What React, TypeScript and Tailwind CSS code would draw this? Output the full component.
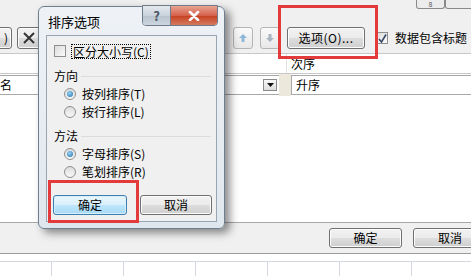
import React from "react";

const font = { fontFamily: '"Noto Sans CJK SC", "Noto Sans", sans-serif' };

function WinButton({
  label,
  className = "",
  focused = false,
}: {
  label: React.ReactNode;
  className?: string;
  focused?: boolean;
}) {
  return (
    <div
      className={`flex shrink-0 items-center justify-center rounded-[3px] border text-[12px] leading-none text-black ${
        focused
          ? "border-[#3c7fb1] bg-[linear-gradient(#eaf6fd_0%,#d9f0fc_50%,#bee6fd_51%,#a7d9f5_100%)] shadow-[inset_0_0_0_1px_#d8eefb]"
          : "border-[#707070] bg-[linear-gradient(#f2f2f2_0%,#ebebeb_50%,#dddddd_51%,#cfcfcf_100%)] shadow-[inset_0_0_0_1px_#fcfcfc]"
      } ${className}`}
    >
      {label}
    </div>
  );
}

function Radio({ checked, label }: { checked?: boolean; label: string }) {
  return (
    <div className="flex h-[18px] items-center pl-[17px]">
      <div className="flex h-[12px] w-[12px] items-center justify-center rounded-full border border-[#8f8f8f] bg-[linear-gradient(#dcdcdc,#f8f8f8)]">
        {checked && (
          <div className="h-[6px] w-[6px] rounded-full bg-[radial-gradient(circle_at_40%_35%,#9ad3f5,#1b6ea8)]" />
        )}
      </div>
      <span className="ml-[6px] text-[12px] leading-none">{label}</span>
    </div>
  );
}

function GroupLabel({ label }: { label: string }) {
  return (
    <div className="flex h-[18px] items-center pl-[7px] pr-[5px]">
      <span className="text-[12px] leading-none">{label}</span>
      <div className="ml-[3px] h-px flex-1 bg-[#dcdcdc]" />
    </div>
  );
}

function ArrowButton({ up }: { up?: boolean }) {
  return (
    <div className="flex h-[22px] w-[20px] shrink-0 items-center justify-center rounded-[3px] border border-[#b5b5b5] bg-[linear-gradient(#fafafa,#e8e8e8)]">
      <svg width="10" height="10" viewBox="0 0 10 10">
        {up ? (
          <path d="M5 1 L9 5 H6.5 V9 H3.5 V5 H1 Z" fill="#8fb7d8" />
        ) : (
          <path d="M5 9 L9 5 H6.5 V1 H3.5 V5 H1 Z" fill="#a8b4c0" />
        )}
      </svg>
    </div>
  );
}

function SortOptionsDialog() {
  return (
    <div className="absolute left-[38px] top-[6px] h-[223px] w-[187px] rounded-[6px] border border-[#6f7f8f] bg-[linear-gradient(#eef2f6,#dfe7ee)] shadow-[5px_4px_8px_rgba(0,0,0,0.45)]">
      {/* title */}
      <div className="absolute left-[9px] top-[8px] text-[13px] leading-none text-black">
        排序选项
      </div>
      {/* caption buttons */}
      <div className="absolute right-[6px] top-[-2px] flex h-[21px] overflow-hidden rounded-b-[4px] border border-[#6d7a88]">
        <div className="flex w-[28px] items-center justify-center border-r border-[#6d7a88] bg-[linear-gradient(#e4e9ee,#c9d2dc_50%,#b7c2cd_51%,#cdd6df)] text-[13px] font-bold leading-none text-[#4a5560]">
          ?
        </div>
        <div className="flex w-[46px] items-center justify-center bg-[linear-gradient(#e8a593,#d4614b_50%,#c5401f_51%,#d57a5f)]">
          <svg width="12" height="10" viewBox="0 0 12 10">
            <path
              d="M2 1 L10 9 M10 1 L2 9"
              stroke="#ffffff"
              strokeWidth="2.6"
              strokeLinecap="round"
            />
          </svg>
        </div>
      </div>
      {/* client area */}
      <div className="absolute bottom-[6px] left-[7px] right-[7px] top-[28px] border border-[#98a6b4] bg-[#f0f0f0] pt-[6px]">
        <div className="flex h-[18px] items-center pl-[7px]">
          <div className="h-[12px] w-[12px] border border-[#8f8f8f] bg-[linear-gradient(135deg,#dcdcdc,#fbfbfb)]" />
          <span className="ml-[5px] border border-dotted border-black px-px text-[12px] leading-[13px]">
            区分大小写(C)
          </span>
        </div>
        <div className="mt-[7px]">
          <GroupLabel label="方向" />
          <Radio checked label="按列排序(T)" />
          <Radio label="按行排序(L)" />
        </div>
        <div className="mt-[6px]">
          <GroupLabel label="方法" />
          <Radio checked label="字母排序(S)" />
          <Radio label="笔划排序(R)" />
        </div>
        <div className="mt-[14px] flex gap-[13px] pl-[6px]">
          <WinButton focused label="确定" className="h-[20px] w-[74px]" />
          <WinButton label="取消" className="h-[20px] w-[72px]" />
        </div>
      </div>
    </div>
  );
}

export default function App() {
  return (
    <div
      className="relative h-[276px] w-[471px] overflow-hidden bg-white text-black"
      style={font}
    >
      {/* top gray area with toolbar */}
      <div className="flex h-[53px] flex-col bg-[#f0f0f0]">
        <div className="flex h-[27px] justify-end">
          <div className="mr-[-4px] flex h-[9px] items-end">
            <div className="flex h-[9px] w-[29px] items-center justify-center rounded-b-[3px] border border-t-0 border-[#8a8a8a] bg-[#ececec] text-[7px] leading-[7px] text-[#555]">
              8
            </div>
            <div className="h-[9px] w-[30px] rounded-b-[3px] border border-t-0 border-[#8a8a8a] bg-[#ececec]" />
          </div>
        </div>
        <div className="flex h-[22px] items-center">
          <WinButton label=")" className="ml-[-28px] h-[22px] w-[40px] justify-end pr-[3px]" />
          <WinButton
            label={
              <svg width="14" height="14" viewBox="0 0 14 14">
                <path d="M2 2 L12 12 M12 2 L2 12" stroke="#333" strokeWidth="2" />
              </svg>
            }
            className="ml-[5px] h-[22px] w-[24px]"
          />
          <div className="ml-[192px] shrink-0">
            <ArrowButton up />
          </div>
          <div className="ml-[7px] shrink-0">
            <ArrowButton />
          </div>
          <WinButton
            label="选项(O)..."
            className="ml-[7px] h-[22px] w-[78px] text-[12px] tracking-[0.5px]"
          />
          <div className="ml-[11px] flex h-[12px] w-[12px] shrink-0 items-center justify-center border border-[#8f8f8f] bg-[linear-gradient(135deg,#dcdcdc,#fbfbfb)]">
            <svg width="9" height="9" viewBox="0 0 9 9">
              <path d="M1 5 L3.5 8 L8 0.5" stroke="#3a4a6a" strokeWidth="1.6" fill="none" />
            </svg>
          </div>
          <span className="ml-[7px] shrink-0 whitespace-nowrap text-[12px] leading-none">
            数据包含标题
          </span>
        </div>
      </div>
      {/* header row */}
      <div className="flex h-[21px] border-y border-[#c8c8c8] bg-white">
        <div className="w-[287px] shrink-0 border-r border-[#e2e2e2]" />
        <div className="flex items-center pl-[4px] text-[12px] leading-none">次序</div>
      </div>
      {/* condition row */}
      <div className="flex h-[22px] items-center">
        <div className="flex h-[20px] w-[279px] shrink-0 items-center justify-between border-y border-[#a8a8a8] bg-white">
          <span className="text-[12px] leading-none">名</span>
          <div className="mr-[2px] flex h-[12px] w-[14px] items-center justify-center border border-[#8a8a8a] bg-[linear-gradient(#f8f8f8,#dcdcdc)]">
            <svg width="7" height="4" viewBox="0 0 7 4">
              <path d="M0 0 H7 L3.5 4 Z" fill="#111" />
            </svg>
          </div>
        </div>
        <div className="h-[22px] w-[12px] shrink-0 bg-[#ece9dc]" />
        <div className="flex h-[20px] flex-1 items-center border border-r-0 border-[#a8a8a8] bg-white pl-[4px] text-[12px] leading-none">
          升序
        </div>
      </div>
      {/* list area */}
      <div className="h-[127px] border-b border-[#a8a8a8] bg-white" />
      {/* footer */}
      <div className="flex h-[31px] items-center justify-end border-b border-[#9a9a9a] bg-[#f0f0f0]">
        <WinButton label="确定" className="h-[20px] w-[73px]" />
        <WinButton label="取消" className="ml-[11px] mr-[-16px] h-[20px] w-[74px]" />
      </div>
      {/* sheet grid */}
      <div className="mt-[7px] flex h-[20px] border-t border-[#d4d9e0]">
        {[52, 72, 72, 72, 72, 72, 72].map((w, i) => (
          <div
            key={i}
            className="h-full shrink-0 border-r border-[#d4d9e0]"
            style={{ width: w }}
          />
        ))}
      </div>

      <SortOptionsDialog />

      {/* red highlight boxes */}
      <div className="absolute left-[278px] top-[5px] h-[54px] w-[100px] border-[3px] border-[#e33b3b]" />
      <div className="absolute left-[48px] top-[180px] h-[43px] w-[91px] border-[3px] border-[#e33b3b]" />
    </div>
  );
}
